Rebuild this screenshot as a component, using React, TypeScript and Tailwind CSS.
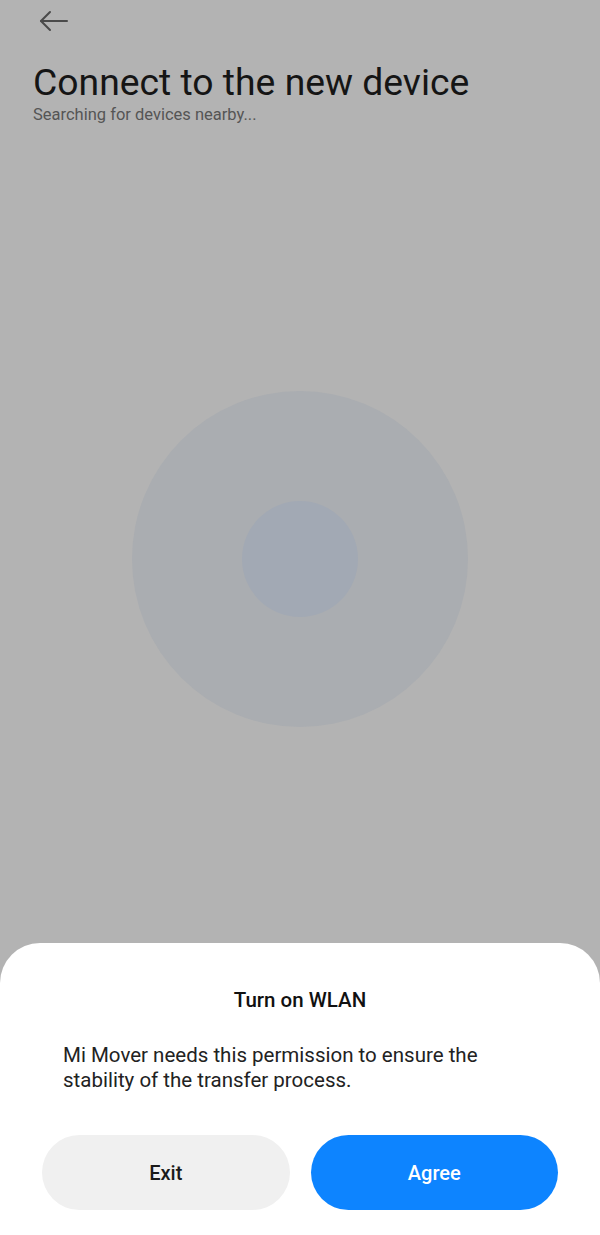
import React from 'react';

const font = { fontFamily: 'Roboto, "Noto Sans", sans-serif' };

const BackArrow = () => (
  <svg width="30" height="22" viewBox="0 0 30 22" fill="none" stroke="#4a4a4a" strokeWidth="2" strokeLinecap="round" strokeLinejoin="round">
    <path d="M28 11H2" />
    <path d="M11 2L2 11L11 20" />
  </svg>
);

export default function App() {
  return (
    <div className="w-[600px] h-[1235px] bg-[#b3b3b3] flex flex-col overflow-hidden" style={font}>
      {/* Header */}
      <div className="px-[33px] pt-[10px]">
        <button className="block ml-[6px]">
          <BackArrow />
        </button>
        <h1 className="mt-[29px] text-[37.3px] leading-[42px] text-[#151515]">Connect to the new device</h1>
        <p className="mt-[2px] text-[16.5px] leading-[20px] text-[#555555]">Searching for devices nearby...</p>
      </div>

      {/* Radar */}
      <div className="flex-1 flex items-start justify-center pt-[266px]">
        <div className="w-[336px] h-[336px] rounded-full bg-[#aaadb1] flex items-center justify-center">
          <div className="w-[116px] h-[116px] rounded-full bg-[#a2a9b4]" />
        </div>
      </div>

      {/* Bottom sheet */}
      <div className="h-[292px] bg-white rounded-t-[40px] px-[42px] pt-[44px]">
        <h2 className="text-center text-[20.5px] leading-[26px] font-medium text-[#111111]">Turn on WLAN</h2>
        <p className="mt-[30px] ml-[21px] w-[465px] text-[20.5px] leading-[25px] text-[#222222]">
          Mi Mover needs this permission to ensure the stability of the transfer process.
        </p>
        <div className="mt-[42px] flex gap-[21px]">
          <button className="flex-1 h-[75px] rounded-full bg-[#f0f0f0] text-[20px] font-medium text-[#1a1a1a]">Exit</button>
          <button className="flex-1 h-[75px] rounded-full bg-[#0d84ff] text-[20px] font-medium text-white">Agree</button>
        </div>
      </div>
    </div>
  );
}
